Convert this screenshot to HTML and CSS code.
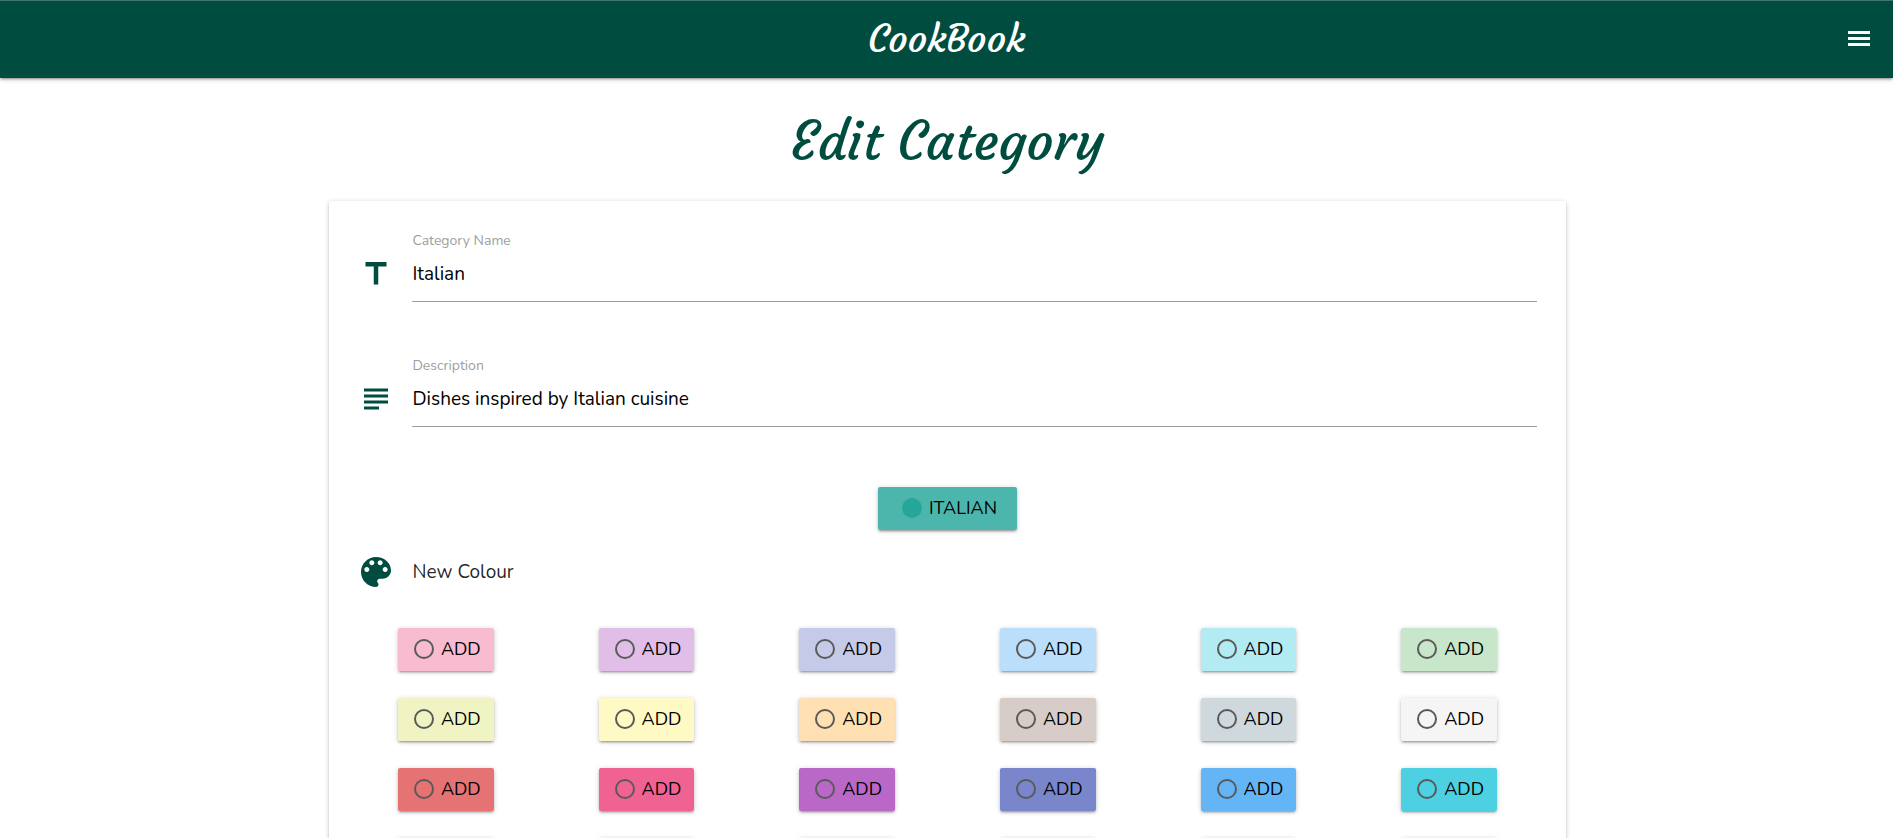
FILE: index.html
```html
<!DOCTYPE html>
<html lang="en">
<head>
<meta charset="utf-8">
<meta name="viewport" content="width=device-width, initial-scale=1">
<title>CookBook - Edit Category</title>
<link rel="stylesheet" href="styles.css">
</head>
<body>
<header class="navbar">
  <a class="brand" href="#">CookBook</a>
  <button class="menu-button" type="button" aria-label="Open menu">
    <svg viewBox="0 0 22 15" aria-hidden="true"><path d="M0 0h22v3H0zM0 6h22v3H0zM0 12h22v3H0z"/></svg>
  </button>
</header>
<main class="container">
  <h1 class="title">Edit Category</h1>
  <form class="card">
    <div class="field">
      <svg class="icon" viewBox="0 0 24 24" aria-hidden="true"><path d="M5 4v3h5.5v12h3V7H19V4z"/></svg>
      <div class="field-body">
        <label for="category-name">Category Name</label>
        <input id="category-name" type="text" value="Italian">
      </div>
    </div>
    <div class="field">
      <svg class="icon" viewBox="0 0 24 24" aria-hidden="true"><path d="M14 17H4v2h10v-2zm6-8H4v2h16V9zM4 15h16v-2H4v2zM4 5v2h16V5H4z"/></svg>
      <div class="field-body">
        <label for="description">Description</label>
        <input id="description" type="text" value="Dishes inspired by Italian cuisine">
      </div>
    </div>
    <div class="current">
      <label class="swatch swatch-current teal"><input type="radio" name="colour" checked>ITALIAN</label>
    </div>
    <div class="colour-heading">
      <svg class="icon icon-large" viewBox="0 0 24 24" aria-hidden="true"><path d="M12 3c-4.97 0-9 4.03-9 9s4.03 9 9 9c.83 0 1.5-.67 1.5-1.5 0-.39-.15-.74-.39-1.01-.23-.26-.38-.61-.38-.99 0-.83.67-1.5 1.5-1.5H16c2.76 0 5-2.24 5-5 0-4.42-4.03-8-9-8zm-5.5 9c-.83 0-1.5-.67-1.5-1.5S5.67 9 6.5 9 8 9.67 8 10.5 7.33 12 6.5 12zm3-4C8.67 8 8 7.33 8 6.5S8.67 5 9.5 5s1.5.67 1.5 1.5S10.33 8 9.5 8zm5 0c-.83 0-1.5-.67-1.5-1.5S13.67 5 14.5 5s1.5.67 1.5 1.5S15.33 8 14.5 8zm3 4c-.83 0-1.5-.67-1.5-1.5S16.67 9 17.5 9s1.5.67 1.5 1.5-.67 1.5-1.5 1.5z"/></svg>
      <span>New Colour</span>
    </div>
    <div class="swatches">
      <label class="swatch pink-light"><input type="radio" name="colour">ADD</label>
      <label class="swatch purple-light"><input type="radio" name="colour">ADD</label>
      <label class="swatch indigo-light"><input type="radio" name="colour">ADD</label>
      <label class="swatch blue-light"><input type="radio" name="colour">ADD</label>
      <label class="swatch cyan-light"><input type="radio" name="colour">ADD</label>
      <label class="swatch green-light"><input type="radio" name="colour">ADD</label>
      <label class="swatch lime-light"><input type="radio" name="colour">ADD</label>
      <label class="swatch yellow-light"><input type="radio" name="colour">ADD</label>
      <label class="swatch orange-light"><input type="radio" name="colour">ADD</label>
      <label class="swatch brown-light"><input type="radio" name="colour">ADD</label>
      <label class="swatch blue-grey-light"><input type="radio" name="colour">ADD</label>
      <label class="swatch grey-light"><input type="radio" name="colour">ADD</label>
      <label class="swatch red"><input type="radio" name="colour">ADD</label>
      <label class="swatch pink"><input type="radio" name="colour">ADD</label>
      <label class="swatch purple"><input type="radio" name="colour">ADD</label>
      <label class="swatch indigo"><input type="radio" name="colour">ADD</label>
      <label class="swatch blue"><input type="radio" name="colour">ADD</label>
      <label class="swatch cyan"><input type="radio" name="colour">ADD</label>
      <label class="swatch green"><input type="radio" name="colour">ADD</label>
      <label class="swatch lime"><input type="radio" name="colour">ADD</label>
      <label class="swatch yellow"><input type="radio" name="colour">ADD</label>
      <label class="swatch orange"><input type="radio" name="colour">ADD</label>
      <label class="swatch brown"><input type="radio" name="colour">ADD</label>
      <label class="swatch blue-grey"><input type="radio" name="colour">ADD</label>
    </div>
  </form>
</main>
</body>
</html>
```
FILE: styles.css
```css
* {
  box-sizing: border-box;
}

html {
  scrollbar-width: none;
}

body {
  margin: 0;
  background: #fff;
  color: rgba(0, 0, 0, 0.87);
  font-family: Nunito, Lato, sans-serif;
  font-size: 19px;
  line-height: 28px;
}

.navbar {
  display: grid;
  grid-template-columns: 1fr auto 1fr;
  align-items: center;
  height: 78px;
  padding: 0 23px 2px;
  border-top: 1px solid #40756c;
  background: #004d40;
  box-shadow: 0 2px 2px rgba(0, 0, 0, 0.14), 0 3px 1px -2px rgba(0, 0, 0, 0.12), 0 1px 5px rgba(0, 0, 0, 0.2);
}

.brand {
  grid-column: 2;
  color: #fff;
  font-family: Courgette, cursive;
  font-size: 38px;
  line-height: 48px;
  text-decoration: none;
}

.menu-button {
  justify-self: end;
  display: flex;
  padding: 0;
  border: 0;
  background: none;
  cursor: pointer;
}

.menu-button svg {
  width: 22px;
  height: 15px;
  fill: #fff;
}

.container {
  width: 65.4%;
  margin: 0 auto;
  padding-left: 2px;
}

.title {
  margin: 0;
  padding: 25px 0 22px;
  color: #004d40;
  font-family: Courgette, cursive;
  font-size: 53px;
  font-weight: 400;
  line-height: 76px;
  text-align: center;
}

.card {
  padding: 27px 29px 40px;
  border-radius: 2px;
  background: #fff;
  box-shadow: 0 2px 2px rgba(0, 0, 0, 0.14), 0 3px 1px -2px rgba(0, 0, 0, 0.12), 0 1px 5px rgba(0, 0, 0, 0.2);
}

.field {
  display: flex;
  align-items: flex-start;
  gap: 18px;
  margin-bottom: 51px;
}

.icon {
  flex: none;
  width: 36px;
  height: 36px;
  fill: #004d40;
}

.field .icon {
  margin-top: 28px;
}

.icon-large {
  width: 40px;
  height: 40px;
}

.field-body {
  display: flex;
  flex: 1;
  flex-direction: column;
}

.field label {
  padding-top: 3px;
  color: #9e9e9e;
  font-size: 14px;
  line-height: 20px;
}

.field input {
  width: 100%;
  height: 51px;
  padding: 0 0 4px;
  border: 0;
  border-bottom: 1px solid #9e9e9e;
  outline: 0;
  background: transparent;
  color: #000;
  font: inherit;
}

.current {
  display: flex;
  justify-content: center;
  padding-top: 9px;
}

.swatch {
  display: flex;
  align-items: center;
  gap: 7px;
  height: 43px;
  padding: 0 13px 1px 16px;
  border-radius: 2px;
  box-shadow: 0 2px 2px rgba(0, 0, 0, 0.14), 0 3px 1px -2px rgba(0, 0, 0, 0.12), 0 1px 5px rgba(0, 0, 0, 0.2);
  color: #000;
  font-size: 18px;
  cursor: pointer;
}

.swatch-current {
  padding: 0 20px 1px 24px;
}

.swatch input {
  width: 20px;
  height: 20px;
  margin: 0;
  border: 2px solid #5a5a5a;
  border-radius: 50%;
  appearance: none;
}

.swatch input:checked {
  border-color: #26a69a;
  background: #26a69a;
}

.colour-heading {
  display: flex;
  align-items: center;
  gap: 16px;
  padding: 22px 0 36px;
}

.colour-heading .icon {
  margin-left: -2px;
}

.swatches {
  display: grid;
  grid-template-columns: repeat(6, 1fr);
  gap: 27px 0;
  justify-items: center;
  margin: 0 -13px;
}

.teal { background: #4db6ac; }
.pink-light { background: #f8bbd0; }
.purple-light { background: #e1bee7; }
.indigo-light { background: #c5cae9; }
.blue-light { background: #bbdefb; }
.cyan-light { background: #b2ebf2; }
.green-light { background: #c8e6c9; }
.lime-light { background: #f0f4c3; }
.yellow-light { background: #fff9c4; }
.orange-light { background: #ffe0b2; }
.brown-light { background: #d7ccc8; }
.blue-grey-light { background: #cfd8dc; }
.grey-light { background: #f5f5f5; }
.red { background: #e57373; }
.pink { background: #f06292; }
.purple { background: #ba68c8; }
.indigo { background: #7986cb; }
.blue { background: #64b5f6; }
.cyan { background: #4dd0e1; }
.green { background: #81c784; }
.lime { background: #dce775; }
.yellow { background: #fff176; }
.orange { background: #ffb74d; }
.brown { background: #a1887f; }
.blue-grey { background: #90a4ae; }
```
